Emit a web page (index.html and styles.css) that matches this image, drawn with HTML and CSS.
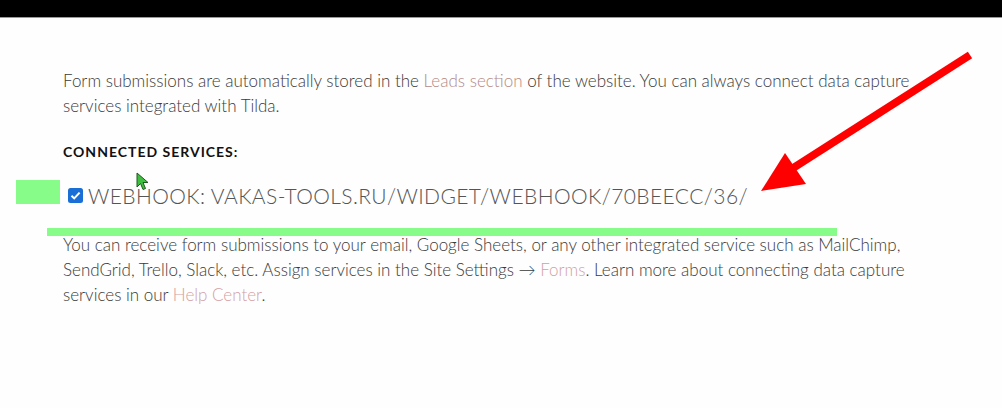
FILE: index.html
```html
<!DOCTYPE html>
<html lang="en">
<head>
<meta charset="utf-8">
<title>Connected services</title>
<link rel="stylesheet" href="styles.css">
</head>
<body>
<div class="topbar"></div>
<main class="content">
  <p class="text intro">Form submissions are automatically stored in the <a class="link link-leads" href="#">Leads section</a> of the website. You can always connect data capture services integrated with Tilda.</p>
  <h3 class="heading">CONNECTED SERVICES:</h3>
  <div class="service-row">
    <span class="checkbox"><svg viewBox="0 0 15 15" width="15" height="15"><rect x="0" y="0" width="15" height="15" rx="2.5" fill="#1a6fd6"/><path d="M3.5 7.8 L6.2 10.4 L11.6 4.6" fill="none" stroke="#fff" stroke-width="2"/></svg></span>
    <span class="service-name">WEBHOOK: VAKAS-TOOLS.RU/WIDGET/WEBHOOK/70BEECC/36/</span>
  </div>
  <p class="text outro">You can receive form submissions to your email, Google Sheets, or any other integrated service such as MailChimp, SendGrid, Trello, Slack, etc. Assign services in the Site Settings → <a class="link link-pink" href="#">Forms</a>. Learn more about connecting data capture services in our <a class="link link-pink" href="#">Help Center</a>.</p>
</main>
<div class="mark mark-block"></div>
<div class="mark mark-bar"></div>
<svg class="cursor" viewBox="0 0 14 19" width="14" height="19"><path d="M1 1 L1 15 L4.5 11.5 L7 17.5 L9.5 16.5 L7 10.5 L12 10.5 Z" fill="#3fbf3f" stroke="#1d5a1d" stroke-width="1"/></svg>
<svg class="arrow" viewBox="0 0 1002 408" width="1002" height="408"><line x1="970" y1="55" x2="790" y2="170" stroke="#ff0000" stroke-width="8"/><polygon points="761,191 785,153 806,184" fill="#ff0000"/></svg>
</body>
</html>
```

FILE: styles.css
```css
html, body {
  margin: 0;
  padding: 0;
  background: #fefefe;
}
body {
  width: 1002px;
  height: 408px;
  overflow: hidden;
  position: relative;
  font-family: "Lato", "Liberation Sans", sans-serif;
}
.topbar {
  height: 17px;
  background: #000;
  border-bottom: 1px solid #9a9a9a;
}
.content {
  padding: 0 0 0 63px;
  width: 872px;
}
.text {
  margin: 0;
  font-size: 17px;
  line-height: 25px;
  font-weight: 300;
  color: #3a3a3a;
}
.intro {
  padding-top: 50px;
}
.link {
  text-decoration: none;
}
.link-leads {
  color: #b48a86;
}
.link-pink {
  color: #d49ea4;
}
.heading {
  margin: 24px 0 0 0;
  font-size: 14px;
  line-height: 20px;
  font-weight: 700;
  letter-spacing: 1px;
  color: #111;
}
.service-row {
  display: flex;
  align-items: center;
  gap: 5px;
  margin: 18px 0 0 5px;
  height: 30px;
}
.checkbox {
  display: flex;
  width: 15px;
  height: 15px;
}
.service-name {
  font-size: 21px;
  font-weight: 300;
  color: #555;
  letter-spacing: 0.4px;
}
.outro {
  margin-top: 22px;
}
.mark {
  position: absolute;
  background: #88fc88;
}
.mark-block {
  left: 16px;
  top: 180px;
  width: 44px;
  height: 24px;
}
.mark-bar {
  left: 47px;
  top: 228px;
  width: 790px;
  height: 8px;
}
.cursor {
  position: absolute;
  left: 136px;
  top: 172px;
}
.arrow {
  position: absolute;
  left: 0;
  top: 0;
  pointer-events: none;
}
```
